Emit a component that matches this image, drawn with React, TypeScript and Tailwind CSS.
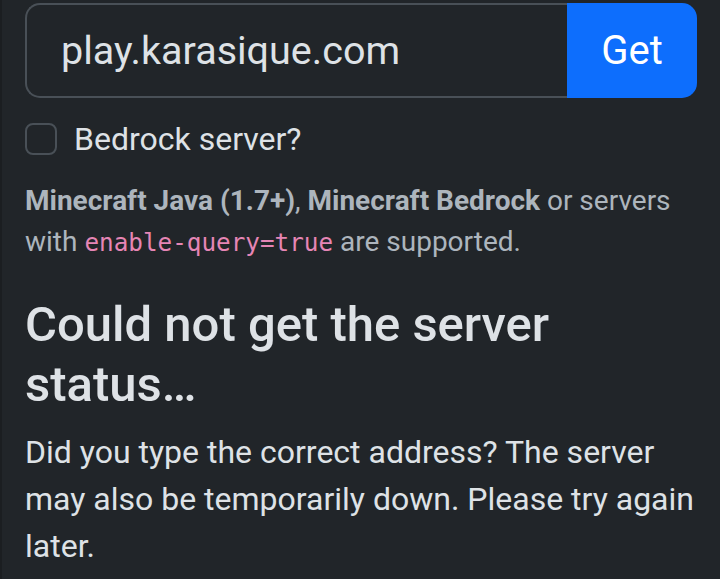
export default function App() {
  return (
    <div className="min-h-screen bg-[#212529] border-l-2 border-[#1b1e21] text-[#dee2e6] font-['Roboto',sans-serif] text-[32px] leading-[1.5] pl-[23px] pr-[23px] pt-[3px] overflow-hidden">
      <div className="flex h-[95px] w-[672px]">
        <input
          readOnly
          value="play.karasique.com"
          className="flex-1 min-w-0 bg-[#212529] border-2 border-r-0 border-[#495057] rounded-l-[15px] px-[34px] text-[39.5px] text-[#dee2e6] outline-none"
        />
        <button className="w-[130px] bg-[#0d6efd] text-white text-[40px] rounded-r-[15px]">
          Get
        </button>
      </div>

      <label className="flex items-center mt-[25px] h-[32px] gap-[17px]">
        <span className="w-[32px] h-[32px] rounded-[8px] border-2 border-[#495057] shrink-0" />
        <span>Bedrock server?</span>
      </label>

      <p className="mt-[25px] text-[28px] leading-[41px] text-[#adb5bd]">
        <strong className="font-bold">Minecraft Java (1.7+)</strong>,{" "}
        <strong className="font-bold">Minecraft Bedrock</strong> or servers with{" "}
        <code className="font-['DejaVu_Sans_Mono',monospace] text-[24.3px] text-[#e685b5]">
          enable-query=true
        </code>{" "}
        are supported.
      </p>

      <h2 className="mt-[32px] text-[49px] leading-[60px] font-medium">
        Could not get the server status…
      </h2>

      <p className="mt-[14px] leading-[47px]">
        Did you type the correct address? The server may also be temporarily down. Please try again later.
      </p>
    </div>
  );
}
